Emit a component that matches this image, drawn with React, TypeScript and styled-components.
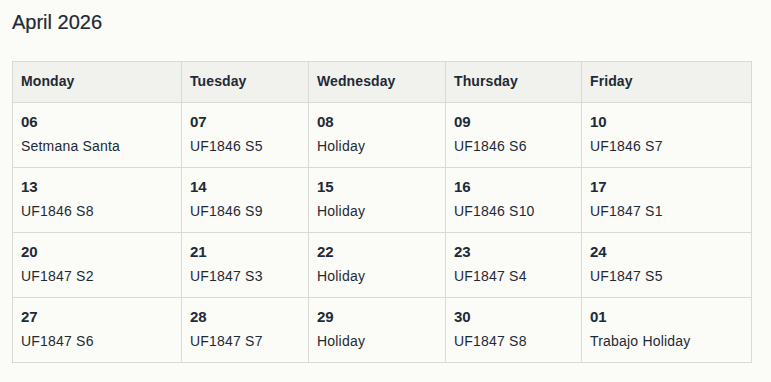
import React from "react";
import styled, {createGlobalStyle} from "styled-components";

interface IDay {
    day: string;
    label: string;
}

const days: Array<string> = ["Monday", "Tuesday", "Wednesday", "Thursday", "Friday"];
const widths: Array<number> = [169, 127, 137, 136, 170];

const weeks: Array<Array<IDay>> = [
    [
        {day: "06", label: "Setmana Santa"},
        {day: "07", label: "UF1846 S5"},
        {day: "08", label: "Holiday"},
        {day: "09", label: "UF1846 S6"},
        {day: "10", label: "UF1846 S7"},
    ],
    [
        {day: "13", label: "UF1846 S8"},
        {day: "14", label: "UF1846 S9"},
        {day: "15", label: "Holiday"},
        {day: "16", label: "UF1846 S10"},
        {day: "17", label: "UF1847 S1"},
    ],
    [
        {day: "20", label: "UF1847 S2"},
        {day: "21", label: "UF1847 S3"},
        {day: "22", label: "Holiday"},
        {day: "23", label: "UF1847 S4"},
        {day: "24", label: "UF1847 S5"},
    ],
    [
        {day: "27", label: "UF1847 S6"},
        {day: "28", label: "UF1847 S7"},
        {day: "29", label: "Holiday"},
        {day: "30", label: "UF1847 S8"},
        {day: "01", label: "Trabajo Holiday"},
    ],
];

const App: React.FC = () => {
    return (
        <Page>
            <GlobalStyle/>
            <Title>April 2026</Title>
            <Calendar>
                <colgroup>
                    {widths.map((w, index: number) => (
                        <col key={`col-${index}`} style={{width: w}}/>
                    ))}
                </colgroup>
                <thead>
                <tr>
                    {days.map((d) => (
                        <HeadCell key={d}>{d}</HeadCell>
                    ))}
                </tr>
                </thead>
                <tbody>
                {weeks.map((week, index: number) => (
                    <tr key={`week-${index}`}>
                        {week.map((item) => (
                            <DayCell key={item.day}>
                                <DayNumber>{item.day}</DayNumber>
                                <DayLabel>{item.label}</DayLabel>
                            </DayCell>
                        ))}
                    </tr>
                ))}
                </tbody>
            </Calendar>
        </Page>
    )
}

export default App;

const GlobalStyle = createGlobalStyle`
  body {
    margin: 0;
    background: #fbfbf8;
    font-family: "Liberation Sans", Arial, sans-serif;
    color: #1e2a36;
  }
`;

const Page = styled.div`
  padding: 10px 12px;
`;

const Title = styled.h2`
  margin: 0 0 27px;
  font-size: 20px;
  line-height: 24px;
  font-weight: 500;
  color: #1e2a36;
  -webkit-text-stroke: 0.2px #1e2a36;
`;

const Calendar = styled.table`
  border-collapse: collapse;
  table-layout: fixed;
  width: 740px;
`;

const HeadCell = styled.th`
  box-sizing: border-box;
  background: #f1f1ed;
  border: 1px solid #d9d9d6;
  height: 41px;
  padding: 0 8px 2px;
  text-align: left;
  font-size: 14px;
  font-weight: 700;
  letter-spacing: 0.1px;
  color: #1e2a36;
`;

const DayCell = styled.td`
  box-sizing: border-box;
  border: 1px solid #d9d9d6;
  padding: 9px 8px 11px;
  height: 65px;
  vertical-align: top;
`;

const DayNumber = styled.div`
  font-size: 15px;
  line-height: 20px;
  font-weight: 700;
  margin-bottom: 4px;
`;

const DayLabel = styled.div`
  font-size: 14px;
  line-height: 20px;
  letter-spacing: 0.2px;
`;
